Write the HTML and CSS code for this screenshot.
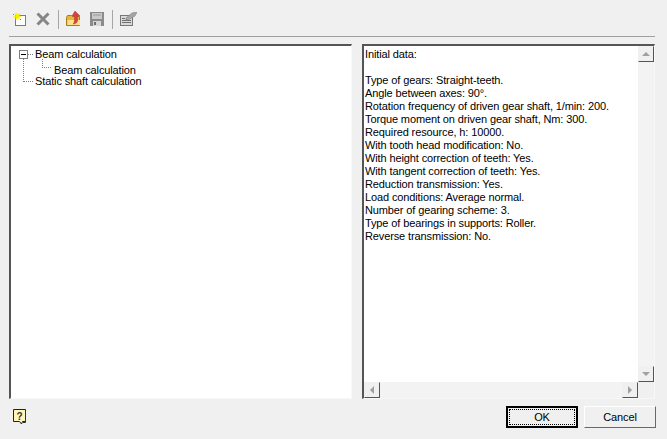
FILE: index.html
```html
<!DOCTYPE html>
<html lang="en">
<head>
<meta charset="utf-8">
<title>Beam calculation</title>
<link rel="stylesheet" href="styles.css">
</head>
<body>
<div class="dialog">
  <div class="toolbar">
    <svg class="tool tool-new" width="15" height="15" viewBox="0 0 15 15">
      <rect x="2.500" y="3.500" width="10" height="10" fill="#fff" stroke="#000" stroke-dasharray="1 1"/>
      <path d="M4 0l.8 2.200L7.500 1 6.300 3.500 8.500 4.500 6.200 5.300 7 8 4.500 6.300 2.500 8 2.700 5.500 0 4.500 2.500 3.500 1.500 1l2 1z" fill="#f7ee00"/>
      <path d="M0 2l1 1M7 7l1 1" stroke="#8a8a30"/>
    </svg>
    <svg class="tool tool-delete" width="14" height="14" viewBox="0 0 14 14">
      <path d="M1.500 1.500l11 11M12.500 1.500l-11 11" stroke="#858585" stroke-width="3" fill="none"/>
    </svg>
    <span class="sep sep-a"></span>
    <svg class="tool tool-open" width="16" height="16" viewBox="0 0 16 16">
      <path d="M.5 6.500l1-2h4l1 1h7v9h-13z" fill="#e8b63a" stroke="#a87c1c"/>
      <path d="M1.500 9h12.500v5H1.500z" fill="#fde289"/>
      <path d="M9 0l5 5h-2.500v5c-.5 2-2.500 3-4.500 3 1.500-1 1.500-3 1.500-8H6z" fill="#db3f3f" stroke="#b73a3a" stroke-width=".5"/>
    </svg>
    <svg class="tool tool-save" width="14" height="14" viewBox="0 0 14 14">
      <path d="M0 0h14v14H0z" fill="#8b8b8b"/>
      <rect x="2" y="1" width="10" height="6" fill="#c9c9c9"/>
      <path d="M3 3h8" stroke="#9a9a9a"/>
      <rect x="3" y="9" width="8" height="5" fill="#d6d6d6"/>
      <rect x="4" y="10" width="2" height="3" fill="#6f6f6f"/>
    </svg>
    <span class="sep sep-b"></span>
    <svg class="tool tool-edit" width="17" height="14" viewBox="0 0 17 14">
      <rect x=".5" y="3.500" width="12" height="10" fill="#d9d9d9" stroke="#767676"/>
      <path d="M2 6.500h3M2 8.500h9M2 10.500h9" stroke="#707070"/>
      <path d="M6 6l6-5 5-1-2 4-7 4H6z" fill="#a6a6a6" stroke="#808080" stroke-width=".6"/>
    </svg>
  </div>
  <div class="panes">
    <div class="tree">
      <div class="node root-node">
        <span class="expander"></span>
        <span class="dash"></span>
        <span class="label">Beam calculation</span>
      </div>
      <div class="node child-node">
        <span class="elbow"></span>
        <span class="label">Beam calculation</span>
      </div>
      <div class="node sibling-node">
        <span class="elbow-long"></span>
        <span class="label">Static shaft calculation</span>
      </div>
    </div>
    <div class="memo">
      <div class="memo-body">
        <div class="memo-text">Initial data:

Type of gears: Straight-teeth.
Angle between axes: 90°.
Rotation frequency of driven gear shaft, 1/min: 200.
Torque moment on driven gear shaft, Nm: 300.
Required resource, h: 10000.
With tooth head modification: No.
With height correction of teeth: Yes.
With tangent correction of teeth: Yes.
Reduction transmission: Yes.
Load conditions: Average normal.
Number of gearing scheme: 3.
Type of bearings in supports: Roller.
Reverse transmission: No.</div>
        <div class="vbar">
          <span class="sbtn"><span class="arrow up"></span></span>
          <span class="sbtn"><span class="arrow down"></span></span>
        </div>
      </div>
      <div class="hbar">
        <span class="sbtn"><span class="arrow left"></span></span>
        <span class="sbtn"><span class="arrow right"></span></span>
        <span class="corner"></span>
      </div>
    </div>
  </div>
  <div class="footer">
    <svg class="help" width="14" height="16" viewBox="0 0 14 16">
      <path d="M.5.500h12v12H9.500l-1 2.500-2-2.500H.5z" fill="#fdf6b8" stroke="#222"/>
      <path d="M12.500 2v11.500H10" fill="none" stroke="#333"/>
      <text x="6.500" y="10.500" class="help-mark">?</text>
    </svg>
    <div class="buttons">
      <button class="btn btn-default"><span class="focus">OK</span></button>
      <button class="btn">Cancel</button>
    </div>
  </div>
</div>
</body>
</html>
```
FILE: styles.css
```css
* { box-sizing: border-box; }
html, body { margin: 0; padding: 0; }
body {
  width: 667px;
  height: 439px;
  overflow: hidden;
  background: #f0f0f0;
  color: #000;
  font-family: "Liberation Sans", Arial, sans-serif;
  font-size: 11px;
  letter-spacing: -0.12px;
}
.dialog { display: flex; flex-direction: column; width: 667px; height: 439px; padding: 0 12px 0 9px; }

.toolbar {
  display: flex;
  align-items: center;
  height: 37px;
  padding: 2px 0 0 4px;
  border-bottom: 1px solid #a0a0a0;
}
.tool { display: block; flex: none; }
.tool-delete { margin-left: 8px; }
.sep { flex: none; width: 1px; height: 19px; background: #a6a6a6; }
.sep-a { margin-left: 8px; margin-right: 7px; }
.tool-save { margin-left: 8px; }
.sep-b { margin-left: 8px; margin-right: 7px; }

.panes { display: flex; gap: 10px; height: 355px; margin-top: 7px; margin-right: -1px; }

.tree {
  width: 343px;
  padding: 2px 0 0 0;
  background: #fff;
  border: 1px solid;
  border-color: #555 #f8f8f8 #f8f8f8 #555;
  border-width: 2px 1px 1px 2px;
}
.node { position: relative; height: 13px; line-height: 13px; white-space: nowrap; display: flex; align-items: center; }
.root-node { padding-left: 24px; height: 13px; }
.child-node { padding-left: 43px; height: 14px; line-height: 14px; padding-top: 3px; }
.sibling-node { padding-left: 24px; height: 12px; }
.label { display: block; }
.expander {
  position: absolute;
  left: 8px;
  top: 2px;
  width: 9px;
  height: 9px;
  border: 1px solid #808080;
  background: linear-gradient(#000, #000) center / 5px 1px no-repeat #fff;
}
.dash { position: absolute; left: 17px; top: 6px; width: 5px; border-top: 1px dotted #808080; }
.elbow { position: absolute; left: 31px; top: -2px; width: 9px; height: 9px; border-left: 1px dotted #808080; border-bottom: 1px dotted #808080; }
.elbow-long { position: absolute; left: 12px; top: -17px; width: 10px; height: 24px; border-left: 1px dotted #808080; border-bottom: 1px dotted #808080; }

.memo {
  display: flex;
  flex-direction: column;
  width: 293px;
  background: #fff;
  border: 1px solid;
  border-color: #555 #f8f8f8 #f8f8f8 #555;
  border-width: 2px 1px 1px 2px;
}
.memo-body { flex: 1; display: flex; min-height: 0; }
.memo-text {
  flex: 1;
  padding: 2px 0 0 1px;
  line-height: 13px;
  white-space: pre;
  overflow: hidden;
}
.vbar {
  display: flex;
  flex-direction: column;
  justify-content: space-between;
  width: 16px;
  background: #f3f3f3;
  flex: none;
}
.hbar { display: flex; height: 16px; background: #f3f3f3; flex: none; justify-content: space-between; }
.corner { width: 16px; flex: none; background: #f0f0f0; }
.hbar .sbtn:nth-child(2) { margin-left: auto; }
.sbtn {
  display: flex;
  align-items: center;
  justify-content: center;
  width: 16px;
  height: 16px;
  flex: none;
  background: #f0f0f0;
  border: 1px solid;
  border-color: #f0f0f0 #555 #555 #f0f0f0;
}
.arrow { width: 0; height: 0; border: 4px solid transparent; }
.arrow.up { border-bottom-color: #a0a0a0; border-top-width: 0; }
.arrow.down { border-top-color: #a0a0a0; border-bottom-width: 0; }
.arrow.left { border-right-color: #a0a0a0; border-left-width: 0; }
.arrow.right { border-left-color: #a0a0a0; border-right-width: 0; }

.footer { flex: 1; display: flex; justify-content: space-between; align-items: flex-start; padding-top: 7px; margin-right: -1px; }
.help { display: block; margin: 3px 0 0 4px; }
.help-mark { font-family: "Liberation Sans", Arial, sans-serif; font-size: 10px; font-weight: bold; fill: #333; text-anchor: middle; }
.buttons { display: flex; gap: 6px; margin-top: 0; }
.btn {
  width: 72px;
  height: 22px;
  padding: 0;
  font: inherit;
  letter-spacing: inherit;
  color: #000;
  background: #f0f0f0;
  border: 1px solid;
  border-color: #fff #696969 #696969 #fff;
}
.btn-default { border: 2px solid #000; padding: 1px; }
.focus { display: flex; align-items: center; justify-content: center; height: 100%; border: 1px dotted #000; }
```
